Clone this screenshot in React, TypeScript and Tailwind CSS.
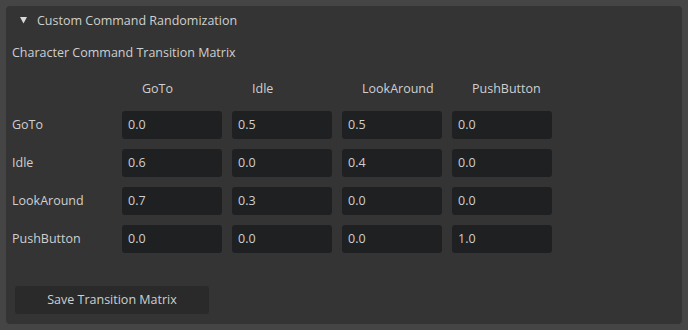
import React from "react";

const cols = ["GoTo", "Idle", "LookAround", "PushButton"];
const rows: [string, string[]][] = [
  ["GoTo", ["0.0", "0.5", "0.5", "0.0"]],
  ["Idle", ["0.6", "0.0", "0.4", "0.0"]],
  ["LookAround", ["0.7", "0.3", "0.0", "0.0"]],
  ["PushButton", ["0.0", "0.0", "0.0", "1.0"]],
];

export default function App() {
  return (
    <div
      className="w-[688px] h-[330px] bg-[#454545] p-[6px] text-[12.5px] text-[#cfcfcf]"
      style={{ fontFamily: '"Open Sans", "Noto Sans", sans-serif' }}
    >
      <div className="h-[318px] w-[676px] rounded-[4px] bg-[#343434] flex flex-col">
        <div className="flex items-center h-[28px] pl-[14px] gap-[10px] pt-[3px]">
          <svg width="7" height="7" viewBox="0 0 7 7" className="mb-[2px]">
            <path d="M0 0 H7 L3.5 6.5 Z" fill="#d8d8d8" />
          </svg>
          <span>Custom Command Randomization</span>
        </div>
        <div className="h-[36px] pl-[6px] pt-[3px] flex items-center">Character Command Transition Matrix</div>
        <div className="pl-[6px] flex flex-col">
          <div className="flex h-[41px] items-center pb-[3px]">
            <div className="w-[110px]" />
            <div className="flex gap-[10px]">
              {cols.map((c) => (
                <div key={c} className="w-[100px] pl-[20px]">
                  {c}
                </div>
              ))}
            </div>
          </div>
          <div className="flex flex-col gap-[10px]">
            {rows.map(([label, vals]) => (
              <div key={label} className="flex items-center h-[28px]">
                <div className="w-[110px]">{label}</div>
                <div className="flex gap-[10px]">
                  {vals.map((v, i) => (
                    <div
                      key={i}
                      className="w-[100px] h-[28px] rounded-[3px] bg-[#1f2022] pl-[6px] flex items-center"
                    >
                      {v}
                    </div>
                  ))}
                </div>
              </div>
            ))}
          </div>
        </div>
        <div className="mt-[33px] ml-[9px] w-[194px] h-[28px] rounded-[3px] bg-[#2a2a2a] flex items-center justify-center">
          Save Transition Matrix
        </div>
      </div>
    </div>
  );
}
